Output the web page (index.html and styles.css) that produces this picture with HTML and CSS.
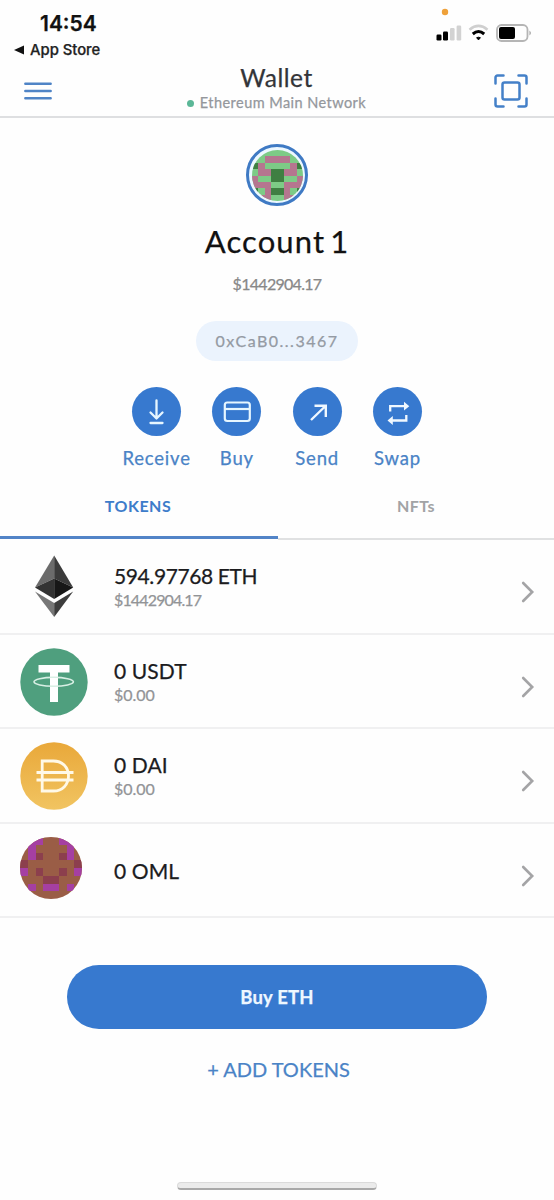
FILE: index.html
```html
<!DOCTYPE html>
<html lang="en">
<head>
<meta charset="utf-8">
<title>Wallet</title>
<link rel="stylesheet" href="styles.css">
</head>
<body>
<div class="screen">
  <div class="status">
    <div class="status-left">
      <div class="time"><span>14:54</span></div>
      <div class="back"><svg width="10" height="10" viewBox="0 0 10 10"><path d="M10 .5v9L0 5z" fill="#111"/></svg><span>App Store</span></div>
    </div>
    <svg class="status-icons" width="100" height="40" viewBox="0 0 100 40">
      <circle cx="11" cy="6" r="3.2" fill="#efa13a"/>
      <rect x="2.5" y="28.5" width="5" height="6" rx="1.2" fill="#000"/>
      <rect x="9" y="25.5" width="5" height="9" rx="1.2" fill="#000"/>
      <rect x="16" y="22" width="4.6" height="12.500" rx="1.2" fill="#d2d2d2"/>
      <rect x="22.600" y="19.500" width="4.600" height="15" rx="1.2" fill="#d2d2d2"/>
      <path d="M35.500 23.700q9-7.600 18 0" fill="none" stroke="#cfcfcf" stroke-width="2.600"/>
      <path d="M38.800 28q5.700-5 11.400 0" fill="none" stroke="#000" stroke-width="3"/>
      <path d="M42.600 31.700q1.900-1 3.800 0l-1.900 2.200z" fill="#000" stroke="#000" stroke-linejoin="round"/>
      <rect x="63" y="19" width="30.500" height="16" rx="4.500" fill="none" stroke="#b5b5b5" stroke-width="1.800"/>
      <rect x="65" y="21" width="16" height="12" rx="2" fill="#000"/>
      <path d="M95.500 24.500q2.600 2.500 0 5z" fill="#999"/>
    </svg>
  </div>

  <header class="header">
    <svg class="menu" width="28" height="18" viewBox="0 0 28 18"><path d="M1.300 1.800h25.400M1.300 9h25.400M1.300 16.200h25.400" stroke="#4f84c6" stroke-width="2.400" stroke-linecap="round"/></svg>
    <div class="heading">
      <h1><span>Wallet</span></h1>
      <div class="network"><i class="dot"></i><span>Ethereum Main Network</span></div>
    </div>
    <svg class="scan" width="34" height="34" viewBox="0 0 34 34" fill="none" stroke="#4480c8" stroke-width="2.500" stroke-linecap="round" stroke-linejoin="round"><path d="M1.500 9.500v-6a2 2 0 0 1 2-2h6M24.500 1.500h6a2 2 0 0 1 2 2v6M32.500 24.500v6a2 2 0 0 1-2 2h-6M9.500 32.500h-6a2 2 0 0 1-2-2v-6"/><rect x="8.500" y="8.500" width="17" height="17" rx="2"/></svg>
  </header>

  <section class="account">
    <div class="avatar">
      <svg width="51" height="51" viewBox="0 0 8 8" shape-rendering="crispEdges">
        <rect width="8" height="8" fill="#7dcb86"/>
        <path fill="#b5768f" d="M2 1h4v1H2zM1 2h1v2H1zM6 2h1v2H6zM2 3h1v1H2zM5 3h1v1H5zM0 4h1v1H0zM7 4h1v1H7zM1 5h2v1H1zM5 5h2v1H5zM2 6h1v2H2zM5 6h1v2H5zM1 7h1v1H1zM6 7h1v1H6zM0 5h1v1H0zM7 5h1v1H7z"/>
        <path fill="#3f7f42" d="M3 3h2v2H3zM3 6h2v1H3zM0 2h1v1H0zM7 2h1v1H7zM0 6h1v1H0zM7 6h1v1H7z"/>
      </svg>
    </div>
    <h2 class="name"><span>Account</span><span class="number">1</span></h2>
    <div class="balance"><span>$1442904.17</span></div>
    <div class="address"><span>0xCaB0...3467</span></div>
  </section>

  <nav class="actions">
    <div class="action"><div class="disc"><svg width="49" height="49" viewBox="0 0 49 49" fill="none" stroke="#e6f6ff" stroke-width="2.300" stroke-linecap="round" stroke-linejoin="round"><path d="M24.500 13.500v17M18.500 25.500l6 6 6-6M18.500 36h12"/></svg></div><span>Receive</span></div>
    <div class="action"><div class="disc"><svg width="49" height="49" viewBox="0 0 49 49" fill="none" stroke="#e6f6ff" stroke-width="2.200"><rect x="12.800" y="15.500" width="25" height="18.500" rx="2.500"/><path d="M12.800 22h25"/></svg></div><span>Buy</span></div>
    <div class="action"><div class="disc"><svg width="49" height="49" viewBox="0 0 49 49" fill="none" stroke="#f0f8ff" stroke-width="2.400"><path d="M18 33l14.500-14M21.500 18.800h11.300v11.300"/></svg></div><span>Send</span></div>
    <div class="action"><div class="disc"><svg width="49" height="49" viewBox="0 0 49 49" fill="none" stroke="#f0f8ff" stroke-width="2.300"><path d="M17.200 24.500v-5.300H32M33.300 28v5.500H18.500"/><path d="M31 14.800l5.300 4.400-5.300 4.400zM19.800 29.100l-5.300 4.400 5.300 4.400z" fill="#f0f8ff" stroke="none"/></svg></div><span>Swap</span></div>
  </nav>

  <div class="tabs">
    <div class="tab active"><span>TOKENS</span></div>
    <div class="tab"><span>NFTs</span></div>
  </div>

  <main class="list">
    <div class="row">
      <svg class="coin" width="68" height="72" viewBox="0 0 68 72"><path fill="#6b6b6b" d="M34.200 8.500L15 40.500 34.200 31.500z"/><path fill="#3b3b3b" d="M34.200 8.500l19 32-19-9z"/><path fill="#333" d="M15 40.500l19.200-9V52z"/><path fill="#171717" d="M53.200 40.500l-19-9V52z"/><path fill="#777" d="M15 44.500L34.200 56v14z"/><path fill="#3d3d3d" d="M53.200 44.500L34.200 56v14z"/></svg>
      <div class="info"><div class="amount long">594.97768 ETH</div><div class="fiat long">$1442904.17</div></div>
      <svg class="chev" width="14" height="22" viewBox="0 0 14 22"><path d="M2.200 2l9 9-9 9"/></svg>
    </div>
    <div class="row">
      <svg class="coin" width="68" height="68" viewBox="0 0 68 68"><circle cx="34" cy="34" r="33.700" fill="#4f9f7e"/><path fill="#fff" d="M18.500 17h31v7.500H38V54h-8V24.500H18.500z"/><ellipse cx="33.700" cy="33.800" rx="19.700" ry="4.400" fill="none" stroke="#d8efe4" stroke-width="1.600"/><path d="M30 30h8v5.500h-8z" fill="#fff"/></svg>
      <div class="info"><div class="amount">0 USDT</div><div class="fiat">$0.00</div></div>
      <svg class="chev" width="14" height="22" viewBox="0 0 14 22"><path d="M2.200 2l9 9-9 9"/></svg>
    </div>
    <div class="row">
      <svg class="coin" width="68" height="68" viewBox="0 0 68 68"><defs><linearGradient id="gold" x1="0" y1="0" x2="0" y2="1"><stop offset="0" stop-color="#e9a83a"/><stop offset="1" stop-color="#f1c461"/></linearGradient></defs><circle cx="34" cy="34" r="33.700" fill="url(#gold)"/><path fill="none" stroke="#fff9e8" stroke-width="2.800" d="M22.200 19h11.300c9 0 15 6.500 15 15s-6 15-15 15H22.200zM16.500 30.500h37M16.500 38h37"/></svg>
      <div class="info"><div class="amount">0 DAI</div><div class="fiat">$0.00</div></div>
      <svg class="chev" width="14" height="22" viewBox="0 0 14 22"><path d="M2.200 2l9 9-9 9"/></svg>
    </div>
    <div class="row">
      <div class="coin token"><svg width="62" height="62" viewBox="0 0 8 8" shape-rendering="crispEdges">
        <rect width="8" height="8" fill="#9a5d46"/>
        <path fill="#a53fa2" d="M1 0h2v1H1zM5 0h2v1H5zM1 1h1v2H1zM6 1h1v2H6zM0 4h1v1H0zM7 4h1v1H7zM1 6h1v1H1zM6 6h1v1H6zM3 6h2v1H3z"/>
        <path fill="#8c3f4d" d="M2 2h1v1H2zM5 2h1v1H5zM0 3h1v1H0zM7 3h1v1H7zM2 4h1v1H2zM5 4h1v1H5zM3 5h2v1H3z"/>
      </svg></div>
      <div class="info"><div class="amount">0 OML</div></div>
      <svg class="chev" width="14" height="22" viewBox="0 0 14 22"><path d="M2.200 2l9 9-9 9"/></svg>
    </div>
  </main>

  <button class="buy-btn"><span>Buy ETH</span></button>
  <div class="add"><span>+ ADD TOKENS</span></div>
  <div class="home"></div>
</div>
</body>
</html>
```

FILE: styles.css
```css
* { box-sizing: border-box; }
body { margin: 0; background: #fefefe; font-family: Lato, "Liberation Sans", sans-serif; color: #1c1c1e; -webkit-text-stroke: .25px currentColor; }
h1, h2 { margin: 0; font-weight: 400; }
svg { display: block; flex: none; }
.screen { width: 554px; height: 1200px; display: flex; flex-direction: column; overflow: hidden; }

.status { height: 64px; display: flex; justify-content: space-between; padding: 6px 20px 0 14px; font-family: Inter, sans-serif; }
.time { padding: 5px 0 0 26px; font-size: 21px; line-height: 25px; font-weight: 600; color: #111; }
.back { display: flex; align-items: center; gap: 6px; padding-top: 4px; font-size: 14.8px; line-height: 20px; font-weight: 500; color: #222; }

.header { height: 54px; display: flex; justify-content: space-between; border-bottom: 2px solid #dedfe1; padding: 0 26px 0 24px; }
.menu { margin: 18px 7px 0 0; }
.scan { margin-top: 10px; }
.heading { display: flex; flex-direction: column; align-items: center; }
.heading h1 { font-size: 24.5px; line-height: 28px; color: #333539; letter-spacing: .5px; }
.network { display: flex; align-items: center; gap: 6px; margin-top: 2px; font-size: 14.5px; line-height: 18px; color: #94979c; letter-spacing: .45px; }
.dot { width: 7px; height: 7px; border-radius: 50%; background: #5bb797; }

.account { height: 269px; display: flex; flex-direction: column; align-items: center; padding-top: 26px; }
.avatar { width: 62px; height: 62px; border: 3px solid #3f7ac4; border-radius: 50%; background: #edf8ff; display: flex; align-items: center; justify-content: center; }
.avatar svg, .token svg { border-radius: 50%; }
.name { display: flex; gap: 5px; margin-top: 16px; font-size: 31px; line-height: 38px; color: #111; letter-spacing: 1.1px; }
.balance { margin-top: 14px; font-size: 16px; line-height: 20px; color: #888; letter-spacing: -.7px; }
.address { margin-top: 27px; width: 162px; height: 40px; border-radius: 20px; background: #ebf3fd; text-align: center; font-size: 16px; line-height: 39px; color: #949aa3; letter-spacing: 1.5px; }

.actions { height: 96px; display: flex; justify-content: center; }
.action { width: 80.300px; display: flex; flex-direction: column; align-items: center; color: #4a83c6; font-size: 18.500px; line-height: 24px; letter-spacing: .8px; }
.disc { width: 49px; height: 49px; border-radius: 50%; background: #3779cf; margin-bottom: 10px; }

.tabs { height: 57px; display: flex; }
.tab { flex: 1; text-align: center; padding-top: 13px; font-size: 16px; line-height: 20px; font-weight: 700; color: #a2a3a5; letter-spacing: .5px; border-bottom: 2px solid #e0e1e2; -webkit-text-stroke: 0; }
.tab.active { color: #3d7cca; border-bottom: 3px solid #5284c7; height: 56px; padding-right: 2px; }

.list { height: 378px; }
.row { height: 94.500px; display: flex; border-bottom: 2px solid #f0f0f1; padding-left: 20px; padding-right: 19px; }
.coin { width: 68px; margin-top: 13px; }
.row:first-child .coin { margin-top: 7px; }
.token { flex: none; }
.info { margin-left: 26px; flex: 1; padding-top: 23px; }
.amount { font-size: 21px; line-height: 26px; color: #1c1c1e; letter-spacing: .1px; }
.amount.long { letter-spacing: -.4px; }
.fiat { font-size: 16px; line-height: 20px; color: #929497; margin-top: 1px; }
.fiat.long { letter-spacing: -.85px; }
.row:last-child .info { padding-top: 34px; }
.chev { margin-top: 41px; fill: none; stroke: #a4a4a6; stroke-width: 2.600; stroke-linecap: round; }

.buy-btn { width: 420px; height: 64px; margin: 47px 0 0 67px; border: 0; border-radius: 32px; background: #3779cf; color: #eef7ff; font: 700 18.500px/64px Lato, sans-serif; letter-spacing: .2px; padding: 0; }
.add { margin-top: 27px; padding-left: 3px; text-align: center; font-size: 20px; line-height: 26px; color: #4a83c6; }
.home { width: 200px; height: 8px; margin: 100px 0 0 177px; border-radius: 4px; background: #ebebeb; border: 1px solid #dadada; border-bottom: 2px solid #a8a8a8; }
```
